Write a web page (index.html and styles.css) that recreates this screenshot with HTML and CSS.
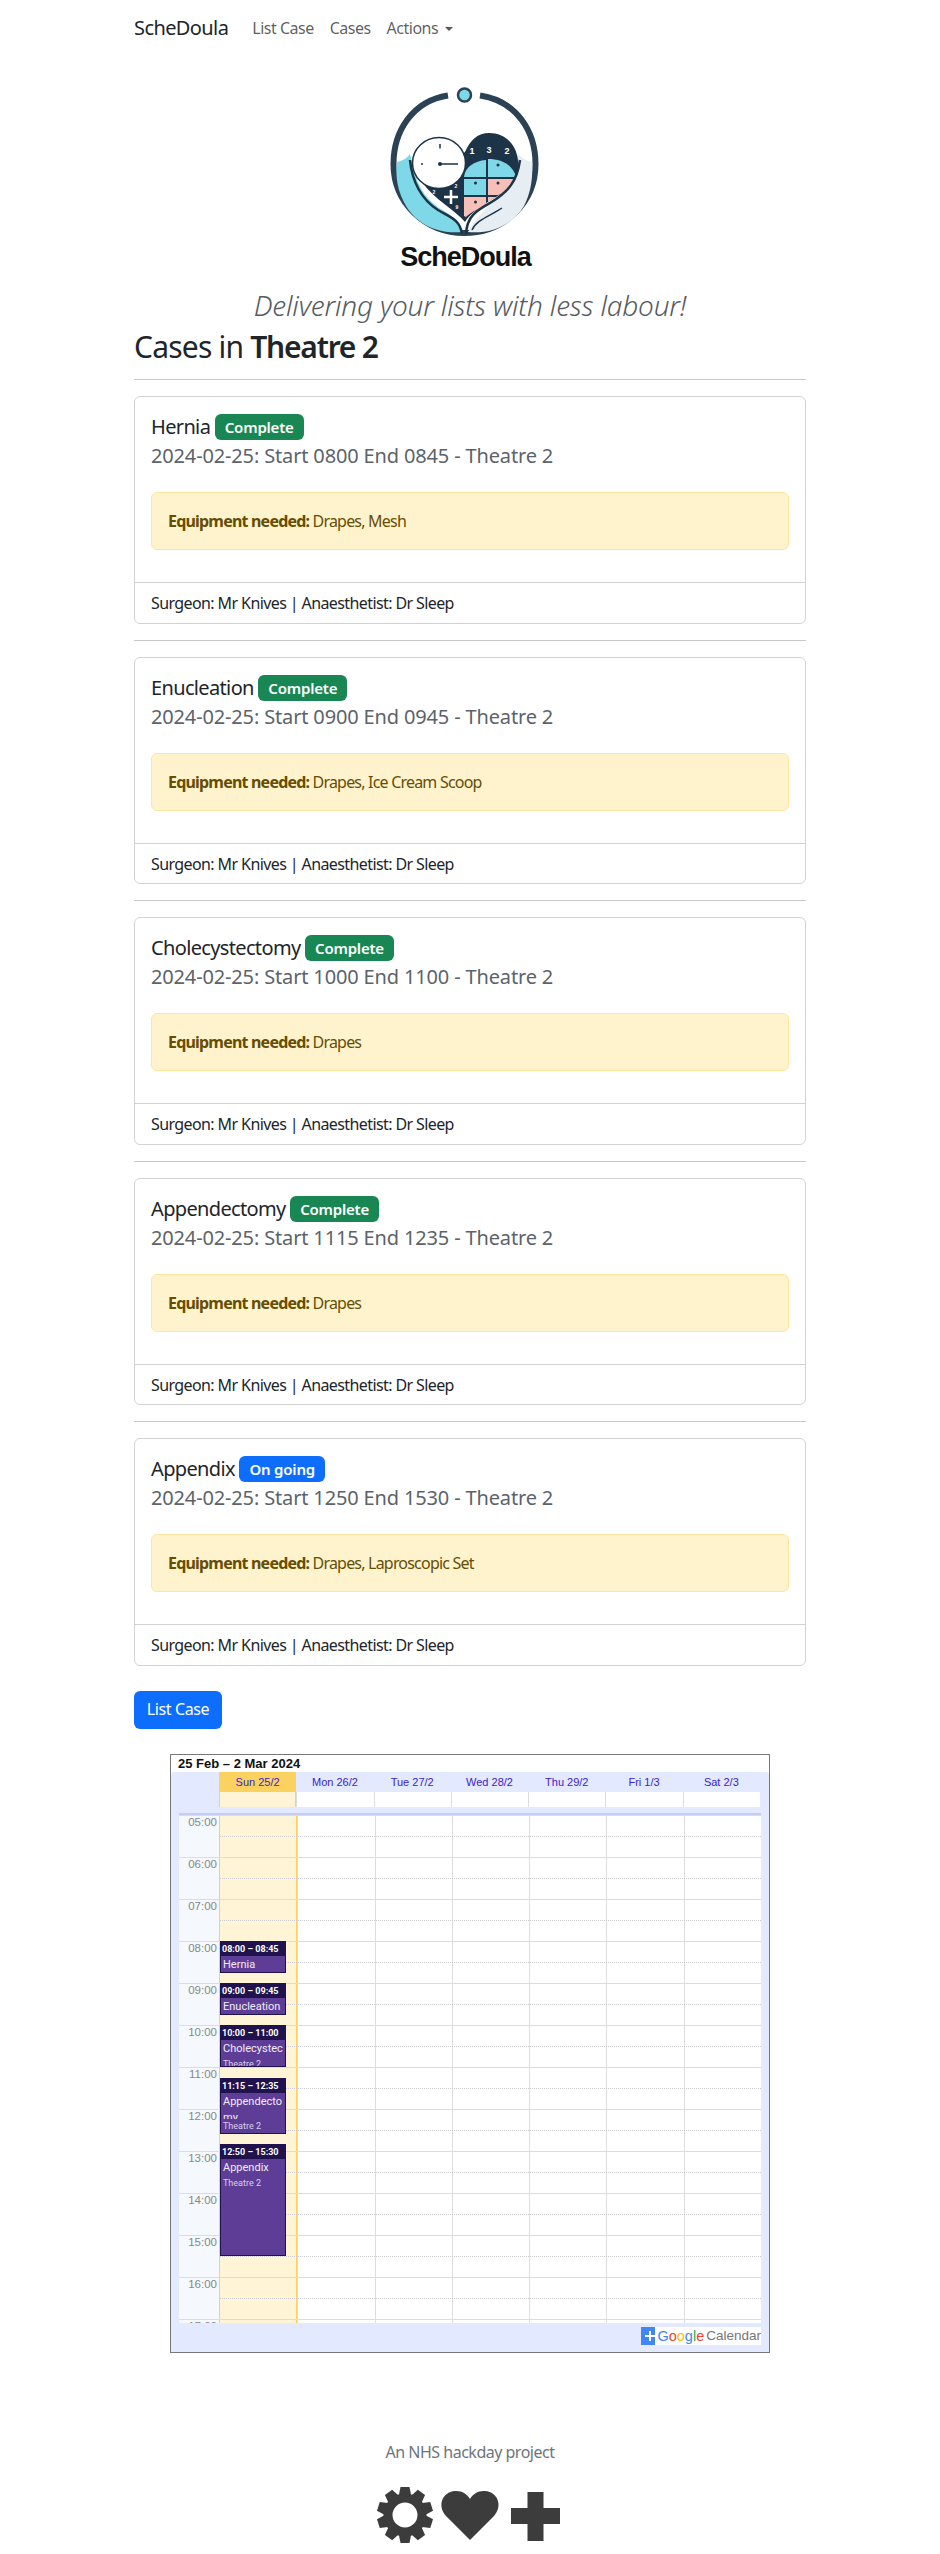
FILE: index.html
```html
<!DOCTYPE html>
<html lang="en">
<head>
    <meta charset="UTF-8">
    <title>ScheDoula - Cases in Theatre 2</title>
    <link rel="stylesheet" href="styles.css">
</head>
<body>
    <nav class="navbar">
        <a class="brand" href="#">ScheDoula</a>
        <a class="nav-link" href="#">List Case</a>
        <a class="nav-link" href="#">Cases</a>
        <a class="nav-link" href="#">Actions <span class="caret"></span></a>
    </nav>

    <main class="container">
        <div class="logo">
            <svg width="260" height="210" viewBox="0 0 260 210">
                <path d="M108 25.500C72 31 53.500 62 53.500 94C53.500 133 85 163 124.500 163C164 163 195.500 133 195.500 94C195.500 62 177 31 140 25.500" fill="none" stroke="#2b4254" stroke-width="6"/>
                <circle cx="124.500" cy="25" r="6.500" fill="#7fd8e8" stroke="#2b4254" stroke-width="2.500"/>
                <!-- hands, outer bands -->
                <path d="M57 92C62 91 66 89 70 84L74 100C78 118 88 132 104 141C114 147 120 152 122 162C100 164 78 156 66 136C58 122 55 108 57 92Z" fill="#7fd8e8"/>
                <path d="M192 92C187 91 183 89 178 84L170 112C160 128 140 140 128 162C150 164 172 156 184 136C191 122 193 108 192 92Z" fill="#e6edf3"/>
                <!-- heart -->
                <path d="M125 82C130 70 138 63 149 63C165 63 176 74 178 90C179 100 176 110 168 118C155 130 135 136 125 152C115 140 95 130 82 112Z" fill="#1d3448"/>
                <!-- calendar cells -->
                <path d="M124 107C125 97 134 91 146 90V107Z" fill="#7fd8e8"/>
                <path d="M148 89C162 89 173 95 176 107H148Z" fill="#7fd8e8"/>
                <rect x="124" y="109" width="22" height="16" fill="#7fd8e8"/>
                <path d="M148 109H175C173 116 168 121 158 125H148Z" fill="#f6bfb8"/>
                <path d="M124 127H146V135C137 139 130 143 126 147L124 146Z" fill="#f6bfb8"/>
                <path d="M148 127H156L148 132Z" fill="#f6bfb8"/>
                <circle cx="135.500" cy="113" r="1.500" fill="#1d3448"/>
                <circle cx="158" cy="113" r="1.500" fill="#1d3448"/>
                <circle cx="158" cy="95" r="1.500" fill="#1d3448"/>
                <circle cx="135.500" cy="132" r="1.500" fill="#1d3448"/>
                <text x="132" y="84" class="logo-num">1</text>
                <text x="149" y="83" class="logo-num">3</text>
                <text x="167" y="84" class="logo-num">2</text>
                <text x="116" y="118" class="logo-tiny">2</text>
                <text x="94" y="124" class="logo-tiny">2</text>
                <text x="117" y="139" class="logo-tiny">9</text>
                <path d="M104 127H118M111 120V134" stroke="#fff" stroke-width="2.500"/>
                <!-- clock -->
                <ellipse cx="99" cy="93" rx="26.500" ry="25.500" fill="#fff" stroke="#1d3448" stroke-width="1.500"/>
                <path d="M100 74V78.500M100 94H118" stroke="#1d3448" stroke-width="1.500" fill="none"/>
                <circle cx="100" cy="94" r="2" fill="#1d3448"/>
                <circle cx="82" cy="94" r="1" fill="#1d3448"/>
                <!-- hand lines -->
                <path d="M70 90C72 112 82 130 98 140C112 148 120 150 122 164" fill="none" stroke="#1d3448" stroke-width="2.500"/>
                <path d="M180 90C177 112 168 122 150 133C136 141 127 146 126 164" fill="none" stroke="#1d3448" stroke-width="2.500"/>
                <path d="M132 160C136 150 150 146 162 138" fill="none" stroke="#1d3448" stroke-width="1.500"/>
                <text x="125.500" y="196" text-anchor="middle" class="logo-text">ScheDoula</text>
            </svg>
        </div>
        <p class="tagline">Delivering your lists with less labour!</p>
        <h2 class="page-title">Cases in <b>Theatre 2</b></h2>
        <hr>

        <div class="card">
            <div class="card-body">
                <h5 class="card-title">Hernia <span class="badge green">Complete</span></h5>
                <h6 class="card-sub">2024-02-25: Start 0800 End 0845 - Theatre 2</h6>
                <div class="alert"><b>Equipment needed:</b> Drapes, Mesh</div>
            </div>
            <div class="card-footer">Surgeon: Mr Knives | Anaesthetist: Dr Sleep</div>
        </div>
        <hr>
        <div class="card">
            <div class="card-body">
                <h5 class="card-title">Enucleation <span class="badge green">Complete</span></h5>
                <h6 class="card-sub">2024-02-25: Start 0900 End 0945 - Theatre 2</h6>
                <div class="alert"><b>Equipment needed:</b> Drapes, Ice Cream Scoop</div>
            </div>
            <div class="card-footer">Surgeon: Mr Knives | Anaesthetist: Dr Sleep</div>
        </div>
        <hr>
        <div class="card">
            <div class="card-body">
                <h5 class="card-title">Cholecystectomy <span class="badge green">Complete</span></h5>
                <h6 class="card-sub">2024-02-25: Start 1000 End 1100 - Theatre 2</h6>
                <div class="alert"><b>Equipment needed:</b> Drapes</div>
            </div>
            <div class="card-footer">Surgeon: Mr Knives | Anaesthetist: Dr Sleep</div>
        </div>
        <hr>
        <div class="card">
            <div class="card-body">
                <h5 class="card-title">Appendectomy <span class="badge green">Complete</span></h5>
                <h6 class="card-sub">2024-02-25: Start 1115 End 1235 - Theatre 2</h6>
                <div class="alert"><b>Equipment needed:</b> Drapes</div>
            </div>
            <div class="card-footer">Surgeon: Mr Knives | Anaesthetist: Dr Sleep</div>
        </div>
        <hr>
        <div class="card">
            <div class="card-body">
                <h5 class="card-title">Appendix <span class="badge blue">On going</span></h5>
                <h6 class="card-sub">2024-02-25: Start 1250 End 1530 - Theatre 2</h6>
                <div class="alert"><b>Equipment needed:</b> Drapes, Laproscopic Set</div>
            </div>
            <div class="card-footer">Surgeon: Mr Knives | Anaesthetist: Dr Sleep</div>
        </div>

        <a class="btn" href="#">List Case</a>

        <!-- calendar embed -->
        <div class="cal">
            <div class="cal-title">25 Feb – 2 Mar 2024</div>
            <div class="cal-body">
                <div class="cal-head">
                    <div></div>
                    <div class="today-head">Sun 25/2</div>
                    <div>Mon 26/2</div>
                    <div>Tue 27/2</div>
                    <div>Wed 28/2</div>
                    <div>Thu 29/2</div>
                    <div>Fri 1/3</div>
                    <div>Sat 2/3</div>
                </div>
                <div class="cal-allday">
                    <div class="allday-gap"></div>
                    <div class="today-cell"></div>
                    <div></div><div></div><div></div><div></div><div></div><div></div>
                </div>
                <div class="cal-strip"></div>
                <div class="cal-grid">
                    <div class="times">
                        <div>05:00</div><div>06:00</div><div>07:00</div><div>08:00</div>
                        <div>09:00</div><div>10:00</div><div>11:00</div><div>12:00</div>
                        <div>13:00</div><div>14:00</div><div>15:00</div><div>16:00</div><div>17:00</div>
                    </div>
                    <div class="days">
                        <div class="day today-col"></div>
                        <div class="day"></div><div class="day"></div><div class="day"></div>
                        <div class="day"></div><div class="day"></div><div class="day"></div>
                    </div>
                    <div class="lines">
                        <div></div><div></div><div></div><div></div><div></div><div></div><div></div>
                        <div></div><div></div><div></div><div></div><div></div><div></div>
                    </div>
                    <div class="event" style="top:125px;height:32px">
                        <div class="ev-time">08:00 – 08:45</div>
                        <div class="ev-body"><div class="ev-title">Hernia</div><div class="ev-sub">Theatre 2</div></div>
                    </div>
                    <div class="event" style="top:167px;height:32px">
                        <div class="ev-time">09:00 – 09:45</div>
                        <div class="ev-body"><div class="ev-title">Enucleation</div><div class="ev-sub">Theatre 2</div></div>
                    </div>
                    <div class="event" style="top:209px;height:42px">
                        <div class="ev-time">10:00 – 11:00</div>
                        <div class="ev-body"><div class="ev-title clip-one">Cholecystectomy</div><div class="ev-sub">Theatre 2</div></div>
                    </div>
                    <div class="event" style="top:262px;height:56px">
                        <div class="ev-time">11:15 – 12:35</div>
                        <div class="ev-body"><div class="ev-title clip-two">Appendectomy</div><div class="ev-sub">Theatre 2</div></div>
                    </div>
                    <div class="event" style="top:328px;height:112px">
                        <div class="ev-time">12:50 – 15:30</div>
                        <div class="ev-body"><div class="ev-title">Appendix</div><div class="ev-sub">Theatre 2</div></div>
                    </div>
                </div>
                <div class="cal-foot">
                    <div class="gcal">
                        <span class="gcal-plus"></span>
                        <span class="gcal-word"><span class="g-b">G</span><span class="g-r">o</span><span class="g-y">o</span><span class="g-b">g</span><span class="g-g">l</span><span class="g-r">e</span></span>
                        <span class="gcal-name">Calendar</span>
                    </div>
                </div>
            </div>
        </div>

        <footer class="foot">
            <p>An NHS hackday project</p>
            <svg width="190" height="60" viewBox="0 0 190 60" class="foot-icons">
                <g transform="translate(30,30)" fill="#3c3c3c">
                    <path id="tooth" d="M-4.500 -28H4.500L6.500 -18H-6.500Z"/>
                    <use href="#tooth" transform="rotate(36)"/>
                    <use href="#tooth" transform="rotate(72)"/>
                    <use href="#tooth" transform="rotate(108)"/>
                    <use href="#tooth" transform="rotate(144)"/>
                    <use href="#tooth" transform="rotate(180)"/>
                    <use href="#tooth" transform="rotate(216)"/>
                    <use href="#tooth" transform="rotate(252)"/>
                    <use href="#tooth" transform="rotate(288)"/>
                    <use href="#tooth" transform="rotate(324)"/>
                    <circle r="17" fill="none" stroke="#3c3c3c" stroke-width="9"/>
                </g>
                <path d="M95 55L71 31C62 21 67 7 80 6C87 5.500 92 9 95 14C98 9 103 5.500 110 6C123 7 128 21 119 31Z" fill="#3c3c3c"/>
                <path d="M152.500 7H168.500V23H185V39H168.500V56H152.500V39H136V23H152.500Z" fill="#3c3c3c"/>
            </svg>
        </footer>
    </main>
</body>
</html>
```

FILE: styles.css
```css
* {
    box-sizing: border-box;
}

body {
    margin: 0;
    font-family: "Noto Sans", sans-serif;
    font-size: 16px;
    line-height: 24px;
    color: #212529;
    background: #fff;
}

a {
    text-decoration: none;
}

hr {
    margin: 16px 0;
    border: 0;
    border-top: 1px solid #c8c9ca;
}

/* navbar */
.navbar {
    width: 672px;
    height: 56px;
    margin: 0 auto;
    display: flex;
    align-items: center;
}

.brand {
    font-size: 20px;
    color: #212529;
    margin-right: 16px;
    letter-spacing: -0.6px;
}

.nav-link {
    padding: 0 8px;
    color: rgba(0, 0, 0, 0.65);
    letter-spacing: -0.5px;
}

.caret {
    display: inline-block;
    margin-left: 3px;
    vertical-align: 3px;
    border-top: 4.800px solid;
    border-left: 4.800px solid transparent;
    border-right: 4.800px solid transparent;
}

.container {
    width: 672px;
    margin: 0 auto;
}

/* logo and heading */
.logo {
    margin-top: 14px;
    height: 210px;
}

.logo svg {
    display: block;
    margin: 0 auto;
}

.logo-text {
    font-family: "Liberation Sans", sans-serif;
    font-weight: 700;
    font-size: 27px;
    letter-spacing: -1px;
    fill: #111;
}

.logo-num {
    font-family: "Liberation Sans", sans-serif;
    font-size: 9px;
    font-weight: 700;
    text-anchor: middle;
    fill: #fff;
}

.logo-tiny {
    font-family: "Liberation Sans", sans-serif;
    font-size: 5px;
    font-weight: 700;
    text-anchor: middle;
    fill: #fff;
}

.tagline {
    margin: 8px 0 0;
    font-size: 28px;
    line-height: 34px;
    font-weight: 300;
    font-style: italic;
    text-align: center;
    color: #565b60;
    letter-spacing: -0.2px;
}

.page-title {
    margin: 9px 0 0;
    font-size: 30px;
    line-height: 32px;
    font-weight: 400;
    letter-spacing: -0.8px;
}

.page-title b {
    font-weight: 600;
    letter-spacing: -1.2px;
}

/* cases */
.card {
    border: 1px solid #d2d3d4;
    border-radius: 6px;
    background: #fff;
}

.card-body {
    padding: 16px;
}

.card-title {
    margin: 0;
    height: 28px;
    font-size: 20px;
    line-height: 28px;
    font-weight: 400;
    letter-spacing: -0.65px;
}

.card-sub {
    margin: 3px 0 24px;
    font-size: 20px;
    line-height: 24px;
    font-weight: 400;
    color: #5c636a;
    letter-spacing: -0.15px;
}

.badge {
    display: inline-block;
    padding: 5px 10px;
    font-size: 15px;
    line-height: 16px;
    font-weight: 600;
    color: #fff;
    border-radius: 6px;
    vertical-align: 1px;
    letter-spacing: -0.2px;
}

.green {
    background: #198754;
}

.blue {
    background: #0d6efd;
}

.alert {
    padding: 16px;
    height: 58px;
    margin-bottom: 16px;
    color: #664d03;
    background: #fff3cd;
    border: 1px solid #ffe69c;
    border-radius: 6px;
    letter-spacing: -0.8px;
}

.card-footer {
    height: 40.500px;
    padding: 8px 16px;
    border-top: 1px solid #d2d3d4;
    letter-spacing: -0.6px;
}

.btn {
    display: block;
    margin-top: 25.500px;
    width: 88px;
    height: 38px;
    line-height: 36px;
    text-align: center;
    color: #fff;
    background: #0d6efd;
    border-radius: 6px;
    letter-spacing: -0.4px;
}

/* calendar embed */
.cal {
    width: 600px;
    height: 599px;
    margin: 25px auto 0;
    border: 1px solid #777;
    font-family: "Liberation Sans", sans-serif;
    display: flex;
    flex-direction: column;
}

.cal-title {
    height: 17px;
    padding-left: 7px;
    font-size: 13px;
    line-height: 17px;
    font-weight: 700;
    color: #111;
}

.cal-body {
    flex: 1;
    background: #e3e9ff;
    border-radius: 3px 3px 0 0;
    padding-left: 8px;
    padding-right: 8px;
}

.cal-head,
.cal-allday {
    display: grid;
    grid-template-columns: 40px repeat(7, 1fr);
    width: 581px;
}

.cal-head {
    height: 20px;
    font-size: 11px;
    line-height: 20px;
    text-align: center;
    color: #3d22cc;
}

.today-head {
    background: #fbd25f;
}

.cal-allday {
    height: 15px;
}

.cal-allday div {
    background: #fff;
    border-left: 1px solid #ddd;
}

.cal-allday .allday-gap {
    background: #e3e9ff;
    border: 0;
}

.cal-allday .today-cell {
    background: #fff4d6;
    border-left: 1px solid #fbd25f;
    border-right: 1px solid #fbd25f;
}

.cal-strip {
    height: 8px;
    border-bottom: 2px solid #c3cdf5;
}

.cal-grid {
    position: relative;
    display: flex;
    height: 508px;
    overflow: hidden;
    background: #fff;
    border-top: 1px solid #ddd;
}

.times {
    width: 40px;
    flex: none;
    background: #f5f8fc;
    font-size: 11.500px;
    line-height: 12px;
    text-align: right;
    color: #888;
}

.times div {
    height: 42px;
    padding: 0 2px 0 0;
}

.days {
    flex: 1;
    display: flex;
}

.day {
    flex: 1;
    border-left: 1px solid #ddd;
}

.today-col {
    background: #fff4d6;
    border-left: 1px solid #fbd25f;
    border-right: 1px solid #fbd25f;
}

.lines {
    position: absolute;
    top: -1px;
    left: 0;
    right: 0;
}

.lines div {
    height: 42px;
    border-top: 1px solid #ddd;
    position: relative;
}

.lines div::after {
    content: "";
    position: absolute;
    top: 20px;
    left: 41px;
    right: 0;
    border-top: 1px dotted #ccc;
}

.event {
    position: absolute;
    left: 41px;
    width: 66px;
    overflow: hidden;
    border: 1px solid #20124d;
    background: #5e3d96;
    font-family: Roboto, sans-serif;
    color: #f1ecf8;
}

.ev-time {
    height: 14px;
    padding-left: 1px;
    background: #20124d;
    color: #fff;
    font-size: 9px;
    line-height: 14px;
    font-weight: 700;
    white-space: nowrap;
}

.ev-body {
    padding: 1px 0 0 2px;
}

.ev-title {
    font-size: 11px;
    line-height: 16px;
    overflow-wrap: anywhere;
}

.clip-one {
    height: 16px;
    overflow: hidden;
}

.clip-two {
    height: 25px;
    overflow: hidden;
}

.ev-sub {
    font-size: 9px;
    line-height: 14px;
    color: #d9cfee;
}

.cal-foot {
    display: flex;
    justify-content: flex-end;
    padding-top: 4px;
}

.gcal {
    display: flex;
    align-items: center;
    width: 120px;
    height: 18px;
    background: #fff;
}

.gcal-plus {
    position: relative;
    width: 18px;
    height: 18px;
    background: #4285f4;
    margin-right: 2px;
}

.gcal-plus::before,
.gcal-plus::after {
    content: "";
    position: absolute;
    background: #fff;
}

.gcal-plus::before {
    left: 4px;
    top: 8px;
    width: 10px;
    height: 2px;
}

.gcal-plus::after {
    left: 8px;
    top: 4px;
    width: 2px;
    height: 10px;
}

.gcal-word {
    font-size: 14.500px;
    margin-right: 2px;
}

.gcal-name {
    font-size: 13.500px;
    color: #777;
}

.g-b { color: #4285f4; }
.g-r { color: #ea4335; }
.g-y { color: #fbbc05; }
.g-g { color: #34a853; }

/* footer */
.foot {
    margin-top: 87px;
    text-align: center;
    color: #6c757d;
    font-size: 16px;
    letter-spacing: -0.5px;
}

.foot p {
    margin: 0 0 21px;
}

.foot-icons {
    display: block;
    margin: 0 auto;
}
```
